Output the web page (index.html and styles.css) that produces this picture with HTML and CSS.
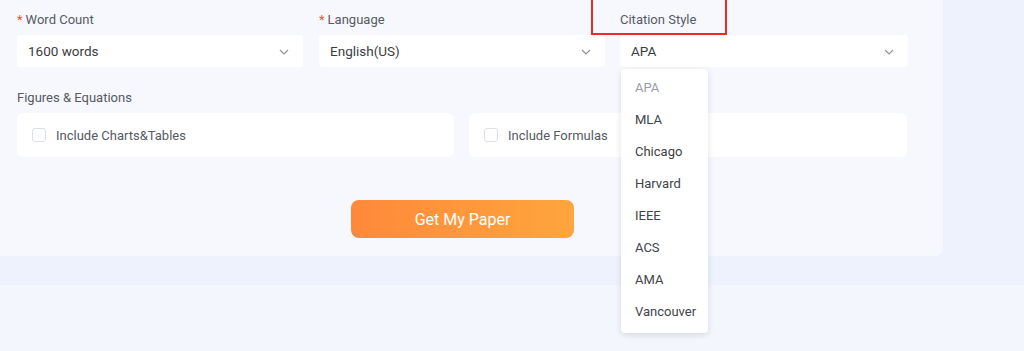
FILE: index.html
```html
<!DOCTYPE html>
<html>
<head>
<meta charset="utf-8">
<link rel="stylesheet" href="styles.css">
</head>
<body>
<div class="page">
  <div class="top">
    <div class="card">
      <div class="row3">
        <div class="field">
          <div class="label"><span class="req">*</span>Word Count</div>
          <div class="select"><span>1600 words</span><svg class="chev" width="10" height="6" viewBox="0 0 10 6"><path d="M1 1l4 4 4-4" fill="none" stroke="#909399" stroke-width="1.2"/></svg></div>
        </div>
        <div class="field">
          <div class="label"><span class="req">*</span>Language</div>
          <div class="select"><span>English(US)</span><svg class="chev" width="10" height="6" viewBox="0 0 10 6"><path d="M1 1l4 4 4-4" fill="none" stroke="#909399" stroke-width="1.2"/></svg></div>
        </div>
        <div class="field cite">
          <div class="label">Citation Style</div>
          <div class="highlight"></div>
          <div class="select"><span>APA</span><svg class="chev" width="10" height="6" viewBox="0 0 10 6"><path d="M1 1l4 4 4-4" fill="none" stroke="#909399" stroke-width="1.2"/></svg></div>
          <ul class="dropdown">
            <li class="sel">APA</li>
            <li>MLA</li>
            <li>Chicago</li>
            <li>Harvard</li>
            <li>IEEE</li>
            <li>ACS</li>
            <li>AMA</li>
            <li>Vancouver</li>
          </ul>
        </div>
      </div>
      <div class="label fig">Figures &amp; Equations</div>
      <div class="row2">
        <label class="check"><span class="box"></span>Include Charts&amp;Tables</label>
        <label class="check"><span class="box"></span>Include Formulas</label>
      </div>
      <div class="actions">
        <button class="btn">Get My Paper</button>
      </div>
    </div>
    <div class="side"></div>
  </div>
  <div class="band"></div>
  <div class="bottom"></div>
</div>
</body>
</html>
```
FILE: styles.css
```css
* { box-sizing: border-box; }
html, body { margin: 0; padding: 0; }
body {
  font-family: Roboto, "Liberation Sans", sans-serif;
  font-size: 13px;
  color: #333;
  background: #f4f6fd;
  width: 1024px;
  height: 351px;
  overflow: hidden;
}
.page { width: 1024px; }
.top { display: flex; background: #eef2fc; }
.card {
  width: 943px;
  height: 256px;
  background: #f7f8fd;
  border-bottom-right-radius: 8px;
  padding: 11px 35px 0 17px;
}
.side { flex: 1; }
.band { height: 29px; background: #eef2fc; }
.bottom { height: 66px; background: #f4f6fd; }

.row3 {
  display: grid;
  grid-template-columns: 286px 286px 287px;
  column-gap: 16px;
}
.field { position: relative; }
.cite { margin-left: -1px; }
.label {
  color: #555a63;
  font-size: 13px;
  line-height: 17px;
  height: 24px;
}
.req { color: #f5532d; margin-right: 3px; }
.select {
  height: 32px;
  background: #fff;
  border-radius: 4px;
  display: flex;
  align-items: center;
  justify-content: space-between;
  padding: 0 14px 0 11px;
  font-size: 13.5px;
  color: #3a3d42;
}
.chev { margin-top: 1px; }
.highlight {
  position: absolute;
  left: -29px;
  top: -13px;
  width: 136px;
  height: 37px;
  border: 2px solid #ee2a23;
}
.dropdown {
  position: absolute;
  left: 1px;
  top: 58px;
  width: 87px;
  margin: 0;
  padding: 3px 0 5px;
  list-style: none;
  background: #fff;
  border-radius: 4px;
  box-shadow: 0 2px 6px rgba(0,0,0,0.12);
  z-index: 5;
}
.dropdown li {
  height: 32px;
  line-height: 32px;
  padding-left: 14px;
  font-size: 13px;
  color: #404349;
}
.dropdown li.sel { color: #9a9da4; }

.fig { margin-top: 22px; height: 24px; }
.row2 {
  display: grid;
  grid-template-columns: 437px 438px;
  column-gap: 15px;
}
.check {
  height: 44px;
  background: #fff;
  border-radius: 6px;
  display: flex;
  align-items: center;
  padding-left: 15px;
  color: #555a63;
  font-size: 13px;
}
.box {
  width: 14px;
  height: 14px;
  border: 1px solid #dcdfe6;
  border-radius: 3px;
  margin-right: 10px;
}
.actions {
  display: flex;
  justify-content: center;
  padding-top: 43px;
}
.btn {
  width: 223px;
  height: 38px;
  border: none;
  border-radius: 8px;
  background: linear-gradient(90deg, #ff893a 0%, #ffa53c 100%);
  color: #fff;
  font-family: Roboto, "Liberation Sans", sans-serif;
  font-size: 16px;
}
```
